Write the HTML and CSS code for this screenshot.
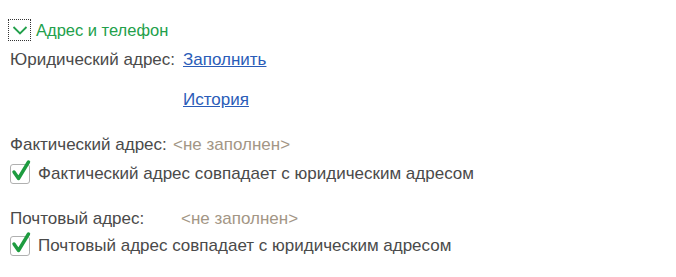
FILE: index.html
```html
<!DOCTYPE html>
<html lang="ru">
<head>
  <meta charset="UTF-8" />
  <title>Адрес и телефон</title>
  <link rel="stylesheet" href="styles.css">
</head>
<body>

<section class="group">
  <div class="group-title">
    <span class="toggle">
      <svg width="16" height="9" viewBox="0 0 16 9"><path d="M1.5 1 L8 7.5 L14.5 1" fill="none" stroke="#22a04b" stroke-width="1.8"/></svg>
    </span>
    <span class="title-text">Адрес и телефон</span>
  </div>

  <div class="row row-legal">
    <span class="label label-legal">Юридический адрес:</span>
    <a href="#" class="link">Заполнить</a>
  </div>
  <div class="row row-history">
    <span class="label label-legal"></span>
    <a href="#" class="link">История</a>
  </div>

  <div class="row row-fact">
    <span class="label label-fact">Фактический адрес:</span>
    <span class="empty">&lt;не заполнен&gt;</span>
  </div>
  <label class="row check-row check-fact">
    <span class="checkbox">
      <svg width="24" height="24" viewBox="0 0 24 24"><path d="M4 13 L8.5 19.5 L18.5 3" fill="none" stroke="#1d9b3f" stroke-width="3.4" stroke-linecap="round" stroke-linejoin="round"/></svg>
    </span>
    <span>Фактический адрес совпадает с юридическим адресом</span>
  </label>

  <div class="row row-post">
    <span class="label label-post">Почтовый адрес:</span>
    <span class="empty">&lt;не заполнен&gt;</span>
  </div>
  <label class="row check-row check-post">
    <span class="checkbox">
      <svg width="24" height="24" viewBox="0 0 24 24"><path d="M4 13 L8.5 19.5 L18.5 3" fill="none" stroke="#1d9b3f" stroke-width="3.4" stroke-linecap="round" stroke-linejoin="round"/></svg>
    </span>
    <span>Почтовый адрес совпадает с юридическим адресом</span>
  </label>
</section>

</body>
</html>
```

FILE: styles.css
```css
* {
  box-sizing: border-box;
  margin: 0;
  padding: 0;
}

body {
  background: #fff;
  font-family: "Liberation Sans", Arial, sans-serif;
  font-size: 17px;
  color: #4a4a4a;
}

.group {
  padding: 19px 0 0 10px;
}

.group-title {
  display: flex;
  align-items: center;
  height: 22px;
  margin-left: -2px;
}

.toggle {
  width: 23px;
  height: 22px;
  border: 1px dotted #333;
  display: flex;
  align-items: center;
  justify-content: center;
  margin-right: 5px;
}

.title-text {
  color: #22a04b;
  font-size: 16.5px;
}

.row {
  display: flex;
  align-items: center;
  height: 24px;
}

.row-legal { margin-top: 7px; }
.row-history { margin-top: 16px; }
.row-fact { margin-top: 21px; }
.row-post { margin-top: 21px; }
.check-fact { margin-top: 5px; }
.check-post { margin-top: 3px; }

.label-legal { width: 173px; }
.label-fact { width: 163px; }
.label-post { width: 171px; }

.link {
  color: #2a5cb8;
  text-decoration: underline;
}

.empty {
  color: #a39685;
}

.checkbox {
  position: relative;
  width: 20px;
  height: 20px;
  border: 1px solid #b0b0b0;
  border-radius: 3px;
  margin-right: 8px;
}

.checkbox svg {
  position: absolute;
  left: -1px;
  top: -6px;
}
```
